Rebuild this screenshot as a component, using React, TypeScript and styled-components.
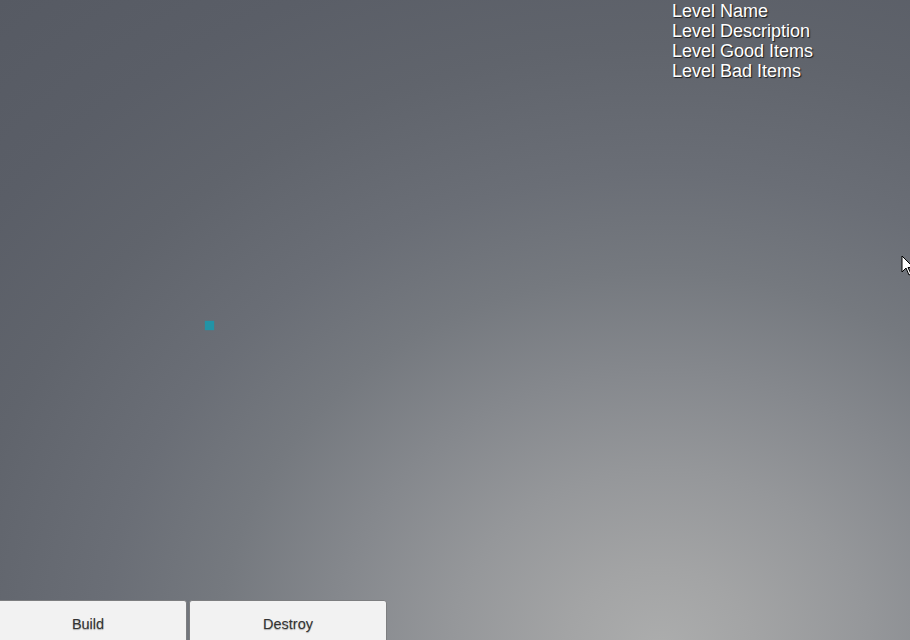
import styled, { createGlobalStyle } from "styled-components";

const GlobalStyle = createGlobalStyle`
  html, body {
    margin: 0;
    padding: 0;
    overflow: hidden;
  }
  body {
    font-family: "Liberation Sans", Arial, sans-serif;
  }
`;

const Stage = styled.div`
  position: relative;
  width: 910px;
  height: 640px;
  overflow: hidden;
  display: flex;
  flex-direction: column;
  justify-content: space-between;
  background: radial-gradient(
    ellipse 1050px 900px at 660px 650px,
    #acadad 0%,
    #a3a4a5 9%,
    #95979a 20%,
    #85888d 31%,
    #75797f 42%,
    #6a6e76 53%,
    #60646c 67%,
    #5a5e67 80%,
    #555962 100%
  );
`;

const InfoPanel = styled.div`
  align-self: flex-end;
  width: 238px;
  padding-top: 1px;
  display: flex;
  flex-direction: column;
`;

const InfoLine = styled.div`
  font-size: 18px;
  line-height: 20px;
  color: #ffffff;
  text-shadow: 1px 1px 1px #17191c;
`;

const Toolbar = styled.div`
  display: flex;
  gap: 2px;
  margin-left: -11px;
  margin-bottom: -8px;
`;

const ToolButton = styled.button`
  width: 198px;
  height: 48px;
  background: #f2f2f2;
  border: 1px solid #7d7e80;
  border-radius: 3px 3px 0 0;
  font-family: "Liberation Sans", Arial, sans-serif;
  font-size: 14.5px;
  color: #333333;
  text-shadow: 0 1px 1px rgba(0, 0, 0, 0.3);
  padding: 0;
`;

const Marker = styled.div`
  position: absolute;
  left: 205px;
  top: 321px;
  width: 9px;
  height: 9px;
  background: #2293a6;
  box-shadow: 0 0 1px #2293a6;
`;

const Cursor = styled.svg`
  position: absolute;
  left: 901px;
  top: 255px;
`;

export default function App() {
  return (
    <>
      <GlobalStyle />
      <Stage>
        <InfoPanel>
          <InfoLine>Level Name</InfoLine>
          <InfoLine>Level Description</InfoLine>
          <InfoLine>Level Good Items</InfoLine>
          <InfoLine>Level Bad Items</InfoLine>
        </InfoPanel>
        <Toolbar>
          <ToolButton>Build</ToolButton>
          <ToolButton>Destroy</ToolButton>
        </Toolbar>
        <Marker />
        <Cursor width="14" height="22" viewBox="0 0 14 22">
          <path
            d="M1 1 L1 17 L5 13 L8 20 L10 19 L7 12.5 L12.5 12.5 Z"
            fill="#ffffff"
            stroke="#000000"
            strokeWidth="1"
            strokeLinejoin="round"
          />
        </Cursor>
      </Stage>
    </>
  );
}
